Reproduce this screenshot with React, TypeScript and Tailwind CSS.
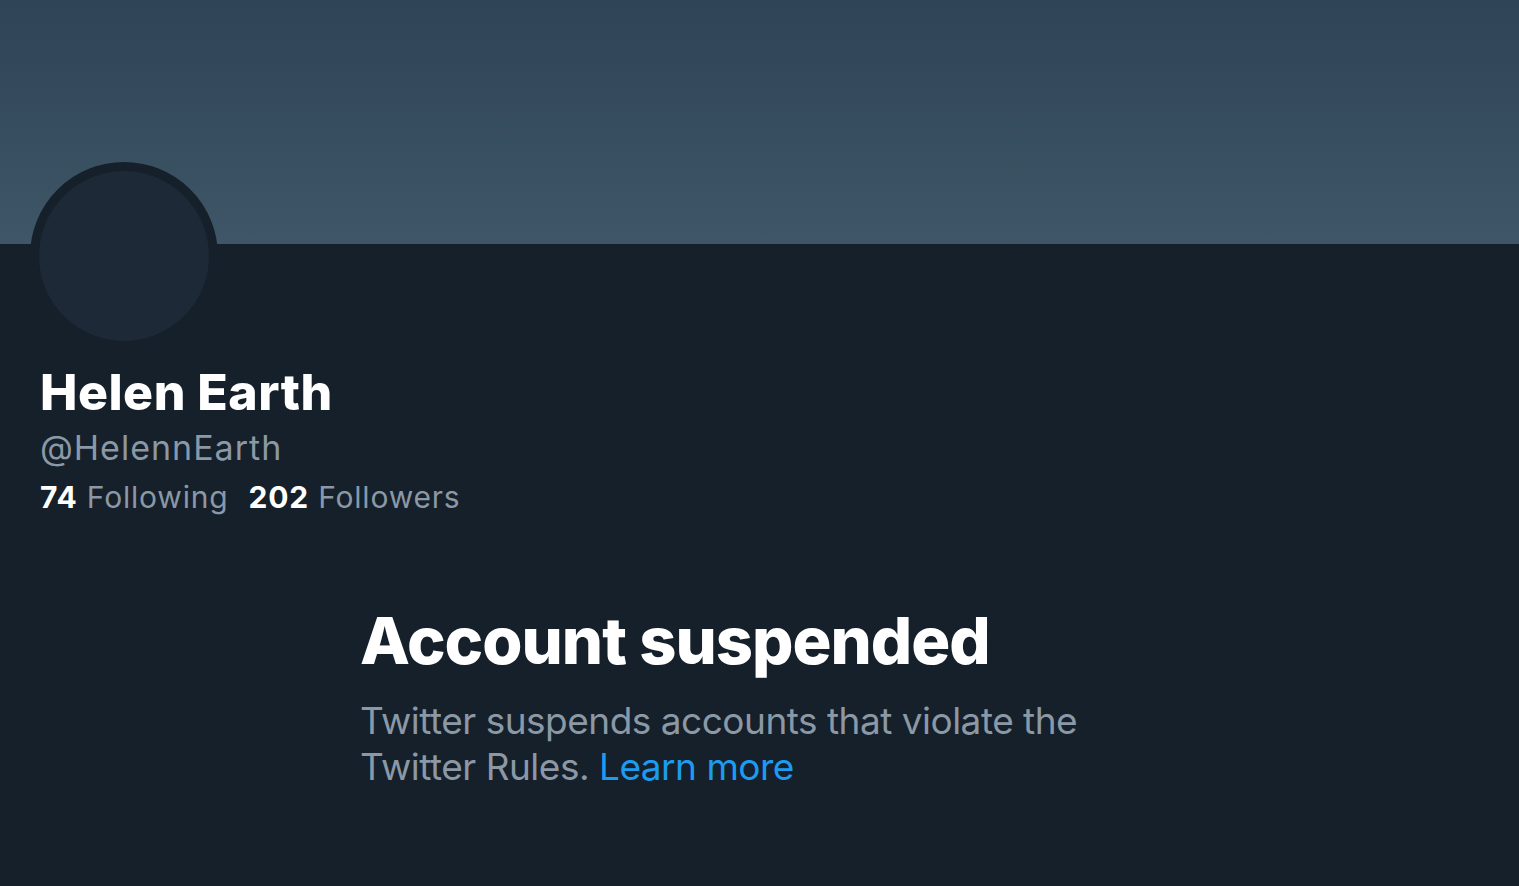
export default function App() {
  return (
    <div className="min-h-[886px] w-full bg-[#15202b] font-['Inter','Roboto',sans-serif] text-white antialiased">
      {/* Banner */}
      <div className="h-[244px] w-full bg-gradient-to-b from-[#2f4456] to-[#3e5667]" />

      <div className="px-[40px]">
        {/* Avatar */}
        <div className="-ml-[10px] -mt-[82px] h-[188px] w-[188px] rounded-full border-[9px] border-[#15202b] bg-[#1e2938]" />

        {/* Profile info */}
        <div className="mt-[14px]">
          <h1 className="text-[50px] font-extrabold leading-[56px] tracking-[0.5px]">Helen Earth</h1>
          <p className="mt-[6px] text-[34px] leading-[44px] tracking-[1px] text-[#8b98a5]">@HelennEarth</p>
          <div className="mt-[7px] flex gap-[20px] text-[30px] leading-[40px] tracking-[0.8px]">
            <span>
              <span className="font-bold text-white">74</span>{' '}
              <span className="text-[#8b98a5]">Following</span>
            </span>
            <span>
              <span className="font-bold text-white">202</span>{' '}
              <span className="text-[#8b98a5]">Followers</span>
            </span>
          </div>
        </div>

        {/* Suspended notice */}
        <div className="ml-[320px] mt-[86px] max-w-[760px]">
          <h2 className="text-[65px] font-extrabold leading-[76px] tracking-[-1px]">Account suspended</h2>
          <p className="mt-[19px] text-[37px] leading-[46px] tracking-[-0.5px] text-[#8b98a5]">
            Twitter suspends accounts that violate the Twitter Rules.{' '}
            <a className="text-[#1d9bf0]">Learn more</a>
          </p>
        </div>
      </div>
    </div>
  )
}
